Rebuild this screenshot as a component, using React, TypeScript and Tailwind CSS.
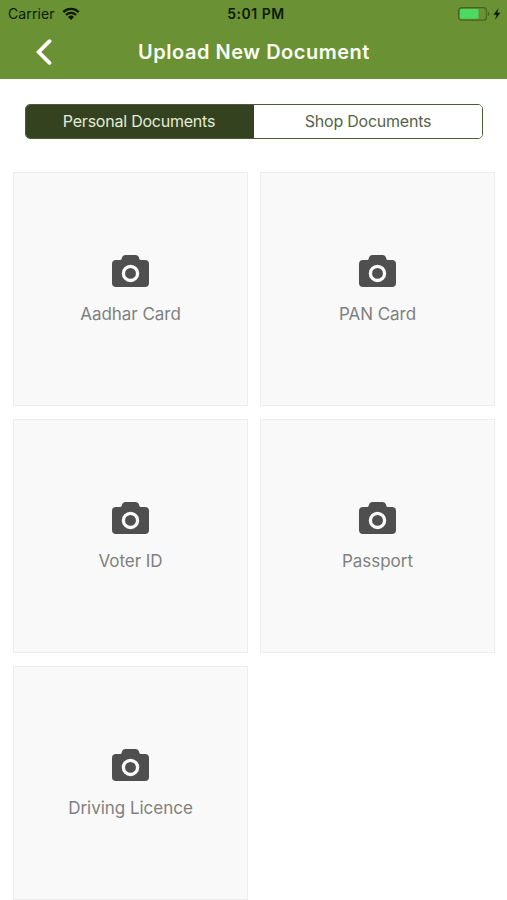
const documents = ["Aadhar Card", "PAN Card", "Voter ID", "Passport", "Driving Licence"];

function WifiIcon() {
  return (
    <svg width="18" height="14" viewBox="0 0 18 14" fill="none" stroke="#0d1a06" strokeWidth="2.3">
      <path d="M1.3 5.1a11 11 0 0 1 15.4 0" />
      <path d="M4 8a7 7 0 0 1 10 0" />
      <path d="M9 12.9 6 9.9a4.3 4.3 0 0 1 6 0Z" fill="#0d1a06" stroke="none" />
    </svg>
  );
}

function BatteryIcon() {
  return (
    <svg width="43" height="14" viewBox="0 0 43 14">
      <rect x="0.6" y="0.6" width="27.8" height="12.6" rx="3" fill="none" stroke="#466620" strokeWidth="1.2" />
      <rect x="2" y="2" width="18.5" height="9.8" rx="1.2" fill="#4cd964" />
      <path d="M29.8 4.8q1.7.6 1.7 2.1t-1.7 2.1Z" fill="#466620" />
      <path d="M40.6 1 35.4 7.7h3.1L37 12.8l5.4-7h-3.2Z" fill="#0d1a06" />
    </svg>
  );
}

function CameraIcon() {
  return (
    <svg width="37" height="32" viewBox="0 0 37 32">
      <path
        d="M4 5h4.200q1.200 0 1.500-1.200l.3-1.200Q10.600 0 13.200 0h10.600q2.600 0 3.200 2.600l.3 1.200Q27.600 5 28.800 5H33q4 0 4 4v19q0 4-4 4H4q-4 0-4-4V9q0-4 4-4Z"
        fill="#4f4f4f"
      />
      <circle cx="18.500" cy="18.400" r="7.100" fill="#4f4f4f" stroke="#fcfcfc" strokeWidth="3.3" />
    </svg>
  );
}

function DocumentCard({ label }: { label: string }) {
  return (
    <button className="flex h-[234px] flex-col items-center border border-[#ededed] bg-[#f9f9f9] pt-[82px]">
      <CameraIcon />
      <span className="mt-[15px] text-[17px] leading-6 tracking-[-0.03px] text-[#808080]">{label}</span>
    </button>
  );
}

export default function App() {
  return (
    <div className="h-[900px] w-full overflow-hidden bg-white font-['Inter',sans-serif]">
      <header className="h-[79px] bg-[#6a9134]">
        <div className="grid h-7 grid-cols-3 items-center pr-[6px] pl-2 text-sm text-[#0d1a06]">
          <div className="flex items-center gap-[7px]">
            <span className="tracking-[0.1px]">Carrier</span>
            <WifiIcon />
          </div>
          <span className="pl-[3px] text-center font-semibold tracking-[0.5px]">5:01 PM</span>
          <div className="flex justify-end">
            <BatteryIcon />
          </div>
        </div>
        <div className="grid h-12 grid-cols-[80px_1fr_80px] items-center">
          <button className="pl-9" aria-label="Back">
            <svg width="16" height="26" viewBox="0 0 16 26" fill="none" stroke="white" strokeWidth="3.8" strokeLinecap="round" strokeLinejoin="miter">
              <path d="M13.500 2.200 2.700 13l10.800 10.800" />
            </svg>
          </button>
          <h1 className="pl-px text-center text-xl font-semibold tracking-[0.52px] text-[#fbfff5]">Upload New Document</h1>
        </div>
      </header>
      <main>
        <div className="mr-6 ml-[25px] mt-[25px] grid h-[35px] grid-cols-2 overflow-hidden rounded-[5px] border border-[#4b5c36] text-base tracking-[-0.23px]">
          <button className="bg-[#344220] pr-[2px] pb-[2px] text-[#e3ecd6]">Personal Documents</button>
          <button className="bg-white pb-[2px] text-[#56634a]">Shop Documents</button>
        </div>
        <div className="mr-3 ml-[13px] mt-[33px] grid grid-cols-2 gap-x-3 gap-y-[13px]">
          {documents.map((label) => (
            <DocumentCard key={label} label={label} />
          ))}
        </div>
      </main>
    </div>
  );
}
